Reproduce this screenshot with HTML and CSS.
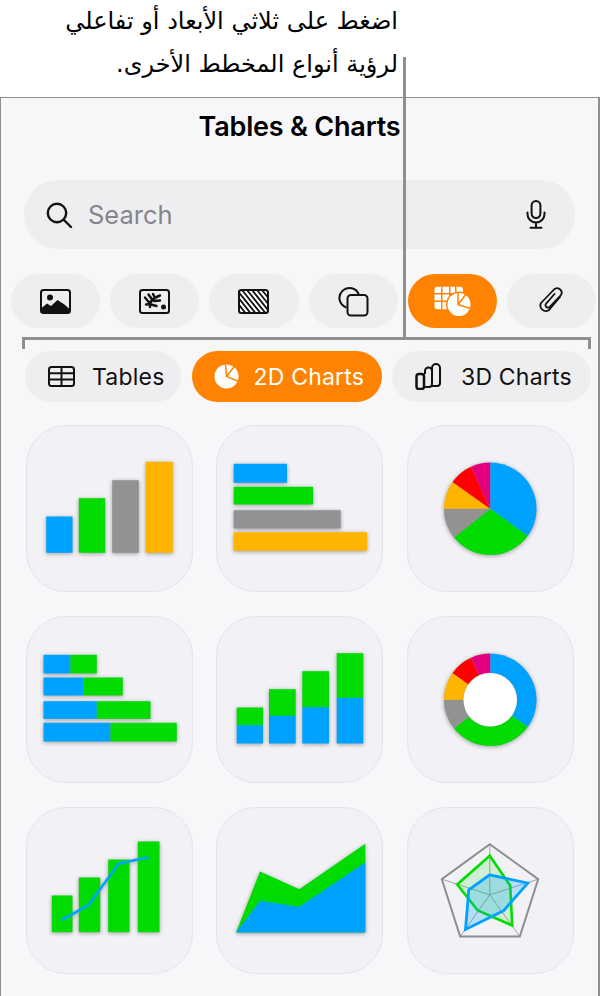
FILE: index.html
```html
<!DOCTYPE html>
<html lang="en">
<head>
    <meta charset="UTF-8">
    <meta name="viewport" content="width=device-width, initial-scale=1.0">
    <title>Tables &amp; Charts</title>
    <link rel="stylesheet" href="styles.css">
</head>
<body>
    <p class="callout" lang="ar" dir="rtl">اضغط على ثلاثي الأبعاد أو تفاعلي<br>لرؤية أنواع المخطط الأخرى.</p>

    <div class="leader-stem"></div>
    <div class="leader-bracket"></div>

    <div class="panel">
        <h1 class="panel-title">Tables &amp; Charts</h1>

        <div class="search-bar">
            <svg class="search-icon" viewBox="0 0 27 26"><circle cx="11" cy="11" r="9.2"/><path d="M17.6 17.6 25 25"/></svg>
            <span class="search-text">Search</span>
            <svg class="mic-icon" viewBox="0 0 20 29"><rect x="5.6" y="1" width="8.8" height="17" rx="4.4"/><path d="M1.5 12.5v1.5a8.5 8.5 0 0 0 17 0v-1.5M10 22.5V27M4.5 27.8h11"/></svg>
        </div>

        <div class="chip-row">
            <div class="chip">
                <svg class="chip-icon" viewBox="0 0 31 25"><rect class="line" x="1" y="1" width="29" height="23" rx="2.5"/><circle class="solid" cx="10" cy="8.5" r="3"/><path class="solid" d="M1 24v-4.500l6-5 4 2.500 6.500-6 7 4.500 5.500 5V24z"/></svg>
            </div>
            <div class="chip">
                <svg class="chip-icon" viewBox="0 0 31 25"><rect class="line" x="1" y="1" width="29" height="23" rx="2.500"/><path class="leaf" d="M11 18C10 13 14 9 21 6.500M6 8.500l4.500 5.500M9.500 5.500l4 5.500M14 5l2 4M7 15.500l4-.5M12 15.500l5.500 1.500M15 12l6-.5"/><circle class="solid" cx="24.500" cy="18" r="2.500"/></svg>
            </div>
            <div class="chip">
                <svg class="chip-icon" viewBox="0 0 31 25"><rect class="hatch" x="1" y="1" width="29" height="23" rx="2.500"/><path class="hatch-line" d="M-5 8 9 26M-5 2 14 26M-1 1 19 26M4 1 24 26M9 1 29 26M14 1 34 26M19 1 36 22M24 1 36 16"/><rect class="line" x="1" y="1" width="29" height="23" rx="2.500"/></svg>
            </div>
            <div class="chip">
                <svg class="chip-icon shapes-icon" viewBox="0 0 31 31"><path class="line" d="M8.500 21.500A10 10 0 1 1 21 9"/><rect class="line" x="9.500" y="9" width="20" height="20.500" rx="3.500"/></svg>
            </div>
            <div class="chip chip-active">
                <svg class="chip-icon table-pie-icon" viewBox="0 0 37 30"><path class="white" d="M.5 3.700a3 3 0 0 1 3-3H7V7H.5zM8.500.7H15V7H8.500zM16.500.7H21V7h-4.500zM22.500.7H26a3 3 0 0 1 3 3V7h-6.500zM.5 8.500H7v6H.5zM8.500 8.500H15v6H8.500zM.5 16H7v7.300H3.500a3 3 0 0 1-3-3zM8.500 16H15v7.300H8.500z"/><circle class="pie-ring" cx="25" cy="18.500" r="13"/><circle class="white" cx="25" cy="18.500" r="11.500"/><path class="pie-cut" d="M24 6v12.500l12 4M24.500 18 32 8"/></svg>
            </div>
            <div class="chip">
                <svg class="clip-icon" viewBox="0 0 26 30"><path class="line" d="M21 11 10 24a5.500 5.500 0 0 1-8-7L15 3.500a4.500 4.500 0 0 1 7 5.500L10.500 21a2.400 2.400 0 0 1-3.600-3.100L15.500 8"/></svg>
            </div>
        </div>

        <div class="tab-row">
            <div class="tab">
                <svg class="tab-icon" viewBox="0 0 27 27"><rect class="line" x="1" y="4" width="25" height="19" rx="2.500"/><path class="line" d="M1 10.300h25M1 16.600h25M13.500 4v19"/></svg>
                <span>Tables</span>
            </div>
            <div class="tab tab-2d tab-active">
                <svg class="tab-icon" viewBox="0 0 25 25"><circle class="white" cx="12.500" cy="12.500" r="12"/><path class="pie-cut" d="M11.500 0 12.500 12.500 25 17.500M12.500 12.500 21 1.500"/></svg>
                <span>2D Charts</span>
            </div>
            <div class="tab tab-3d">
                <svg class="tab-icon" viewBox="0 0 27 27"><rect class="line bar-front" x="1.500" y="11" width="7.500" height="15" rx="2.500"/><path class="line" d="M9 24h5a3 3 0 0 0 3-3V8a3.500 3.500 0 0 0-7 0v3M17 23h5a3 3 0 0 0 3-3V5a4 4 0 0 0-8 0v3"/></svg>
                <span>3D Charts</span>
            </div>
        </div>

        <div class="card-grid">
            <div class="card">
                <svg class="chart" viewBox="0 0 167 167">
                    <rect class="c-blue" x="20.200" y="91.500" width="26.300" height="36.300"/>
                    <rect class="c-green" x="52.800" y="73.200" width="26.400" height="54.600"/>
                    <rect class="c-gray" x="86.200" y="55.200" width="26.600" height="72.600"/>
                    <rect class="c-yellow" x="119.800" y="36.800" width="27" height="91"/>
                </svg>
            </div>
            <div class="card">
                <svg class="chart" viewBox="0 0 167 167">
                    <rect class="c-blue" x="17.700" y="38.800" width="53.300" height="19"/>
                    <rect class="c-green" x="17.700" y="61.800" width="79.300" height="17.700"/>
                    <rect class="c-gray" x="17.700" y="85.200" width="107" height="18.300"/>
                    <rect class="c-yellow" x="17.700" y="107.200" width="133.300" height="18.600"/>
                </svg>
            </div>
            <div class="card">
                <svg class="chart" viewBox="0 0 167 167">
                    <path class="c-blue" d="M83.200 83.800V37.500A46.300 46.300 0 0 1 120.700 111z"/>
                    <path class="c-green" d="M83.200 83.800 120.700 111A46.300 46.300 0 0 1 47 112.600z"/>
                    <path class="c-gray" d="M83.200 83.800 47 112.600A46.300 46.300 0 0 1 36.900 83.800z"/>
                    <path class="c-yellow" d="M83.200 83.800H36.900A46.300 46.300 0 0 1 45.500 56.900z"/>
                    <path class="c-red" d="M83.200 83.800 45.500 56.900A46.300 46.300 0 0 1 64 41.700z"/>
                    <path class="c-pink" d="M83.200 83.800 64 41.700A46.300 46.300 0 0 1 83.200 37.500z"/>
                </svg>
            </div>
            <div class="card">
                <svg class="chart" viewBox="0 0 167 167">
                    <rect class="c-blue" x="17.500" y="38.800" width="27" height="18.700"/>
                    <rect class="c-green" x="44.500" y="38.800" width="26.300" height="18.700"/>
                    <rect class="c-blue" x="17.500" y="61.500" width="40" height="18"/>
                    <rect class="c-green" x="57.500" y="61.500" width="39.300" height="18"/>
                    <rect class="c-blue" x="17.500" y="85.200" width="53.300" height="17.700"/>
                    <rect class="c-green" x="70.800" y="85.200" width="53.700" height="17.700"/>
                    <rect class="c-blue" x="17.500" y="106.800" width="67" height="18.700"/>
                    <rect class="c-green" x="84.500" y="106.800" width="66.300" height="18.700"/>
                </svg>
            </div>
            <div class="card">
                <svg class="chart" viewBox="0 0 167 167">
                    <rect class="c-green" x="20.700" y="91.500" width="26.300" height="18"/>
                    <rect class="c-blue" x="20.700" y="109.200" width="26.300" height="18.300"/>
                    <rect class="c-green" x="53" y="73.200" width="26.700" height="27"/>
                    <rect class="c-blue" x="53" y="99.800" width="26.700" height="27.700"/>
                    <rect class="c-green" x="86.300" y="55.200" width="26.700" height="36.300"/>
                    <rect class="c-blue" x="86.300" y="91.200" width="26.700" height="36.300"/>
                    <rect class="c-green" x="120.700" y="37.200" width="26.600" height="45"/>
                    <rect class="c-blue" x="120.700" y="81.800" width="26.600" height="45.700"/>
                </svg>
            </div>
            <div class="card">
                <svg class="chart" viewBox="0 0 167 167">
                    <path class="c-blue" d="M83.200 83.800V37.500A46.300 46.300 0 0 1 120.700 111z"/>
                    <path class="c-green" d="M83.200 83.800 120.700 111A46.300 46.300 0 0 1 47 112.600z"/>
                    <path class="c-gray" d="M83.200 83.800 47 112.600A46.300 46.300 0 0 1 36.900 83.800z"/>
                    <path class="c-yellow" d="M83.200 83.800H36.900A46.300 46.300 0 0 1 45.500 56.900z"/>
                    <path class="c-red" d="M83.200 83.800 45.500 56.900A46.300 46.300 0 0 1 64 41.700z"/>
                    <path class="c-pink" d="M83.200 83.800 64 41.700A46.300 46.300 0 0 1 83.200 37.500z"/>
                    <circle class="c-hole" cx="83.200" cy="83.800" r="27"/>
                </svg>
            </div>
            <div class="card">
                <svg class="chart" viewBox="0 0 167 167">
                    <rect class="c-green" x="25.800" y="88.500" width="20.700" height="36.700"/>
                    <rect class="c-green" x="52.800" y="70.500" width="21.400" height="54.700"/>
                    <rect class="c-green" x="82.200" y="52.500" width="21.300" height="72.700"/>
                    <rect class="c-green" x="111.800" y="34.500" width="21.700" height="90.700"/>
                    <polyline class="trend" points="36.800,112.500 62.800,97.800 92.800,56.500 121.500,50.500"/>
                </svg>
            </div>
            <div class="card">
                <svg class="chart" viewBox="0 0 167 167">
                    <polygon class="c-green" points="20,125.500 44,64.500 83.300,82.200 149.300,36.800 149.300,125.500"/>
                    <polygon class="c-blue" points="20,125.500 44,93.800 83.300,99.800 149.300,55.200 149.300,125.500"/>
                </svg>
            </div>
            <div class="card">
                <svg class="chart chart-radar" viewBox="0 0 167 167">
                    <path class="radar-spoke" d="M82.800 87.800V37.200M82.800 87.800 131.200 72.200M82.800 87.800 112.800 129.500M82.800 87.800 53.200 129.500M82.800 87.800 34.800 72.200"/>
                    <polygon class="radar-frame" points="82.800,37.200 131.200,72.200 112.800,129.500 53.200,129.500 34.800,72.200"/>
                    <polygon class="radar-green" points="82.800,48.800 103.200,78.500 105.200,118.500 70.800,103.500 50.200,77.500"/>
                    <polygon class="radar-blue" points="82.800,67.800 120.800,76.200 96.800,103.500 58.500,122.500 61.800,82.800"/>
                </svg>
            </div>
        </div>
    </div>
</body>
</html>
```

FILE: styles.css
```css
html, body {
    margin: 0;
    padding: 0;
}
body {
    width: 601px;
    height: 996px;
    overflow: hidden;
    position: relative;
    background-color: #fff;
    color: #000;
    font-family: Inter, "Noto Sans", sans-serif;
}
svg {
    display: block;
    flex: none;
}

/* callout above the panel */
.callout {
    margin: 0;
    width: 398px;
    height: 97px;
    font-family: "DejaVu Sans", sans-serif;
    font-size: 24px;
    line-height: 43px;
    text-align: right;
    white-space: nowrap;
}
.leader-stem {
    position: absolute;
    left: 403px;
    top: 57px;
    width: 3px;
    height: 282px;
    background-color: #8f8f8f;
    z-index: 2;
}
.leader-bracket {
    position: absolute;
    left: 22px;
    top: 337px;
    width: 563px;
    height: 9px;
    border: 3px solid #8f8f8f;
    border-bottom: none;
    z-index: 2;
}

/* panel */
.panel {
    width: 600px;
    height: 899px;
    box-sizing: border-box;
    background-color: #f7f7fa;
    border: 1px solid #8e8e8e;
    border-bottom: none;
    border-right-width: 2px;
}
.panel-title {
    margin: 0;
    height: 82px;
    text-align: center;
    font-size: 27px;
    font-weight: 600;
    line-height: 58px;
    letter-spacing: -0.2px;
}

.search-bar {
    display: flex;
    align-items: center;
    width: 551px;
    height: 69px;
    margin-left: 23px;
    padding: 0 29px 0 22px;
    box-sizing: border-box;
    border-radius: 34px;
    background-color: #eeeef1;
}
.search-icon {
    width: 27px;
    height: 26px;
    fill: none;
    stroke: #111;
    stroke-width: 2.4;
    stroke-linecap: round;
}
.search-text {
    margin-left: 15px;
    flex: 1;
    font-size: 25.500px;
    color: #85858a;
}
.mic-icon {
    width: 20px;
    height: 29px;
    fill: none;
    stroke: #111;
    stroke-width: 2;
    stroke-linecap: round;
}

/* media type chips */
.chip-row {
    display: flex;
    gap: 10px;
    margin: 25px 0 0 10px;
}
.chip {
    display: flex;
    align-items: center;
    justify-content: center;
    width: 89.200px;
    height: 54px;
    border-radius: 27px;
    background-color: #eeeef0;
}
.chip-active {
    background-color: #ff8300;
}
.chip-icon {
    width: 31px;
    height: 25px;
}
.shapes-icon {
    width: 31px;
    height: 31px;
}
.table-pie-icon {
    width: 37px;
    height: 30px;
}
.clip-icon {
    width: 26px;
    height: 30px;
}
.line {
    fill: none;
    stroke: #111;
    stroke-width: 2;
    stroke-linejoin: round;
}
.clip-icon .line {
    stroke-width: 1.800;
    stroke-linecap: round;
}
.bar-front {
    stroke-width: 2.500;
}
.solid {
    fill: #111;
}
.white {
    fill: #fff;
}
.leaf {
    fill: none;
    stroke: #111;
    stroke-width: 2.400;
    stroke-linecap: round;
}
.hatch {
    fill: #fff;
}
.hatch-line {
    fill: none;
    stroke: #111;
    stroke-width: 1.800;
}
.pie-ring {
    fill: #ff8300;
}
.pie-cut {
    fill: none;
    stroke: #ff8300;
    stroke-width: 1.500;
}

/* chart sub tabs */
.tab-row {
    display: grid;
    grid-template-columns: 156px 190px 199px;
    column-gap: 10.500px;
    margin: 23px 0 0 24px;
}
.tab {
    display: flex;
    align-items: center;
    gap: 17px;
    height: 51px;
    padding-left: 23px;
    border-radius: 26px;
    background-color: #eeeef0;
    font-size: 23px;
    letter-spacing: 0.2px;
    color: #111;
    white-space: nowrap;
}
.tab-active {
    background-color: #ff8300;
    color: #fff;
}
.tab-2d {
    gap: 15px;
    padding-left: 22px;
}
.tab-2d .tab-icon {
    width: 25px;
    height: 25px;
}
.tab-3d {
    gap: 19px;
}
.tab-icon {
    width: 27px;
    height: 27px;
}

/* chart thumbnails */
.card-grid {
    display: grid;
    grid-template-columns: repeat(3, 167px);
    column-gap: 23.700px;
    row-gap: 24px;
    margin: 23px 0 0 24.500px;
}
.card {
    width: 167px;
    height: 167px;
    box-sizing: border-box;
    border: 1px solid #e3e3e9;
    border-radius: 40px;
    background-color: #f1f1f6;
}
.chart {
    width: 167px;
    height: 167px;
    margin: -1px;
    filter: drop-shadow(0 1px 2px rgba(0, 0, 0, 0.35));
}
.chart-radar {
    filter: none;
}
.c-blue { fill: #00a2ff; }
.c-green { fill: #00dc00; }
.c-gray { fill: #929292; }
.c-yellow { fill: #ffb400; }
.c-red { fill: #ff0000; }
.c-pink { fill: #e3007f; }
.c-hole {
    fill: #fff;
    stroke: rgba(0, 0, 0, 0.15);
    stroke-width: 1;
}
.trend {
    fill: none;
    stroke: #00a2ff;
    stroke-width: 2.600;
    stroke-linejoin: round;
    stroke-linecap: round;
}
.radar-spoke {
    fill: none;
    stroke: #a4a4a4;
    stroke-width: 1;
}
.radar-frame {
    fill: none;
    stroke: #8e8e8e;
    stroke-width: 2;
}
.radar-green {
    fill: rgba(0, 220, 0, 0.14);
    stroke: #00dc00;
    stroke-width: 2.600;
}
.radar-blue {
    fill: rgba(0, 162, 255, 0.24);
    stroke: #00a2ff;
    stroke-width: 2.800;
}
```
